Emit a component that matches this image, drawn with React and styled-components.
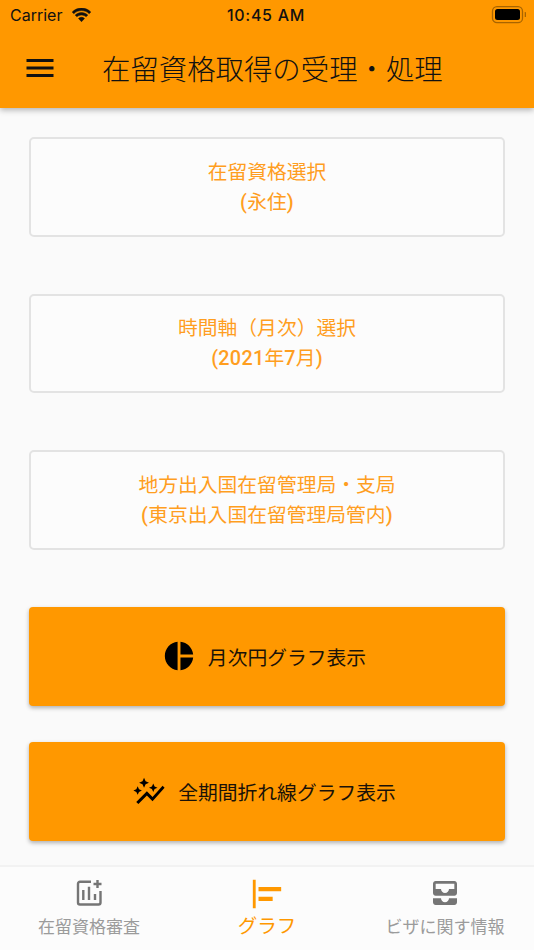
import styled, { createGlobalStyle } from "styled-components"
import { MdPieChart, MdAutoGraph, MdAlignHorizontalLeft, MdAllInbox, MdMenu } from "react-icons/md"

const Global = createGlobalStyle`
html, body {
  margin: 0;
  padding: 0;
  background: #fafafa;
}
* { box-sizing: border-box; }
`;

const Page = styled.div`
  width: 534px;
  height: 950px;
  display: flex;
  flex-direction: column;
  overflow: hidden;
  background: #fafafa;
  font-family: "Noto Sans CJK JP", "Noto Sans", sans-serif;
`;

const Header = styled.header`
  height: 108px;
  flex: none;
  background: #ff9800;
  color: #111;
  box-shadow: 0 2px 6px rgba(0, 0, 0, 0.3);
  display: flex;
  flex-direction: column;
  position: relative;
  z-index: 1;
`;

const StatusBar = styled.div`
  height: 30px;
  display: grid;
  grid-template-columns: 1fr auto 1fr;
  align-items: center;
  padding: 0 10px;
  font-family: Inter, "Liberation Sans", sans-serif;
  font-size: 16px;
`;

const Carrier = styled.div`
  display: flex;
  align-items: center;
  gap: 9px;
`;

const Clock = styled.div`
  font-weight: 500;
  letter-spacing: 0.7px;
  margin-right: 2px;
`;

const Battery = styled.svg`
  justify-self: end;
  margin-right: -3px;
`;

const TitleRow = styled.div`
  flex: 1;
  display: flex;
  align-items: center;
  padding: 0 0 2px 22px;
`;

const Title = styled.h1`
  margin: 0 0 0 44px;
  font-size: 28.4px;
  font-weight: 300;
  line-height: 1;
  white-space: nowrap;
`;

const Main = styled.main`
  flex: 1;
  display: flex;
  flex-direction: column;
  padding: 29px 29px 0;
`;

const SelectCard = styled.button`
  height: 99.5px;
  margin-bottom: ${(p) => p.$gap}px;
  background: #fcfcfc;
  border: 2px solid #e3e3e3;
  border-radius: 5px;
  color: #ff9e1f;
  font: inherit;
  font-size: 19.8px;
  line-height: 30px;
  text-align: center;
  padding: 0;
`;

const SubLabel = styled.span`
  display: block;
`;

const Latin = styled.span`
  font-family: Roboto, "Liberation Sans", sans-serif;
  font-weight: 500;
  letter-spacing: 0.3px;
`;

const ActionButton = styled.button`
  height: ${(p) => p.$h}px;
  margin-bottom: ${(p) => p.$gap}px;
  background: #ff9800;
  border: 0;
  border-radius: 4px;
  box-shadow: 0 2px 4px rgba(0, 0, 0, 0.3);
  color: #1a1208;
  font: inherit;
  font-size: 19.8px;
  display: flex;
  align-items: center;
  justify-content: center;
  gap: 12px;
  padding: 0 6px 0 0;
`;

const TabBar = styled.nav`
  height: 85px;
  flex: none;
  background: #fcfcfc;
  border-top: 2px solid #f2f2f2;
  display: grid;
  grid-template-columns: 178px 178px 178px;
`;

const Tab = styled.div`
  display: flex;
  flex-direction: column;
  align-items: center;
  padding-top: 10px;
  color: ${(p) => (p.$active ? "#ff9800" : "#9b9b9b")};
  font-size: ${(p) => (p.$active ? "19.5px" : "17px")};
  line-height: 26px;
  svg {
    color: ${(p) => (p.$active ? "#ff9800" : "#757575")};
    flex: none;
    margin-bottom: ${(p) => (p.$active ? "1px" : "4px")};
  }
`;

const Wifi = () => (
  <svg width="21" height="15" viewBox="0 0 21 15" fill="currentColor" stroke="currentColor" strokeWidth="0.5">
    <path d="M10.5 2.6c3 0 5.7 1.2 7.7 3.1l1.6-1.7C17.4 1.6 14.1 0 10.5 0S3.6 1.6 1.2 4l1.6 1.7c2-1.9 4.7-3.1 7.7-3.1z" />
    <path d="M10.5 7c1.8 0 3.4.7 4.6 1.8l1.7-1.7C15.1 5.6 12.9 4.5 10.5 4.5S5.9 5.6 4.2 7.1l1.7 1.7C7.1 7.7 8.7 7 10.5 7z" />
    <path d="M10.5 9.3c-1.2 0-2.2.5-3 1.2l3 3.2 3-3.2c-.8-.7-1.8-1.2-3-1.2z" />
  </svg>
);

const ChartIcon = () => (
  <svg width="32" height="32" viewBox="0 0 32 32" fill="none" stroke="currentColor" strokeWidth="2.4">
    <path d="M18 4.7H7a2 2 0 0 0-2 2V25.5a2 2 0 0 0 2 2H25.5a2 2 0 0 0 2-2V14" />
    <path d="M24.5 3v8M20.5 7h8" />
    <path d="M10.3 13v10M16 9.7V23M22 17v6" />
  </svg>
);

const App = () => {
  return (
    <>
      <Global />
      <Page>
        <Header>
          <StatusBar>
            <Carrier>
              Carrier
              <Wifi />
            </Carrier>
            <Clock>10:45 AM</Clock>
            <Battery width="36" height="18" viewBox="0 0 36 18">
              <rect x="1.5" y="0.7" width="30" height="16" rx="4.5" fill="none" stroke="#a86400" strokeWidth="1.3" />
              <rect x="4" y="3" width="25" height="11" rx="2.5" fill="#000" />
              <rect x="33.7" y="6" width="1.3" height="5" rx="0.6" fill="#a86400" />
            </Battery>
          </StatusBar>
          <TitleRow>
            <MdMenu size={36} />
            <Title>在留資格取得の受理・処理</Title>
          </TitleRow>
        </Header>
        <Main>
          <SelectCard $gap={57}>在留資格選択<SubLabel><Latin>(</Latin>永住<Latin>)</Latin></SubLabel></SelectCard>
          <SelectCard $gap={57}>時間軸（月次）選択<SubLabel><Latin>(2021</Latin>年<Latin>7</Latin>月<Latin>)</Latin></SubLabel></SelectCard>
          <SelectCard $gap={57}>地方出入国在留管理局・支局<SubLabel><Latin>(</Latin>東京出入国在留管理局管内<Latin>)</Latin></SubLabel></SelectCard>
          <ActionButton $h={99.5} $gap={36}><MdPieChart size={34} color="#000" />月次円グラフ表示</ActionButton>
          <ActionButton $h={99} $gap={0}><MdAutoGraph size={34} color="#000" />全期間折れ線グラフ表示</ActionButton>
        </Main>
        <TabBar>
          <Tab><ChartIcon />在留資格審査</Tab>
          <Tab $active><MdAlignHorizontalLeft size={34} />グラフ</Tab>
          <Tab><MdAllInbox size={32} />ビザに関す情報</Tab>
        </TabBar>
      </Page>
    </>
  )
}

export default App
